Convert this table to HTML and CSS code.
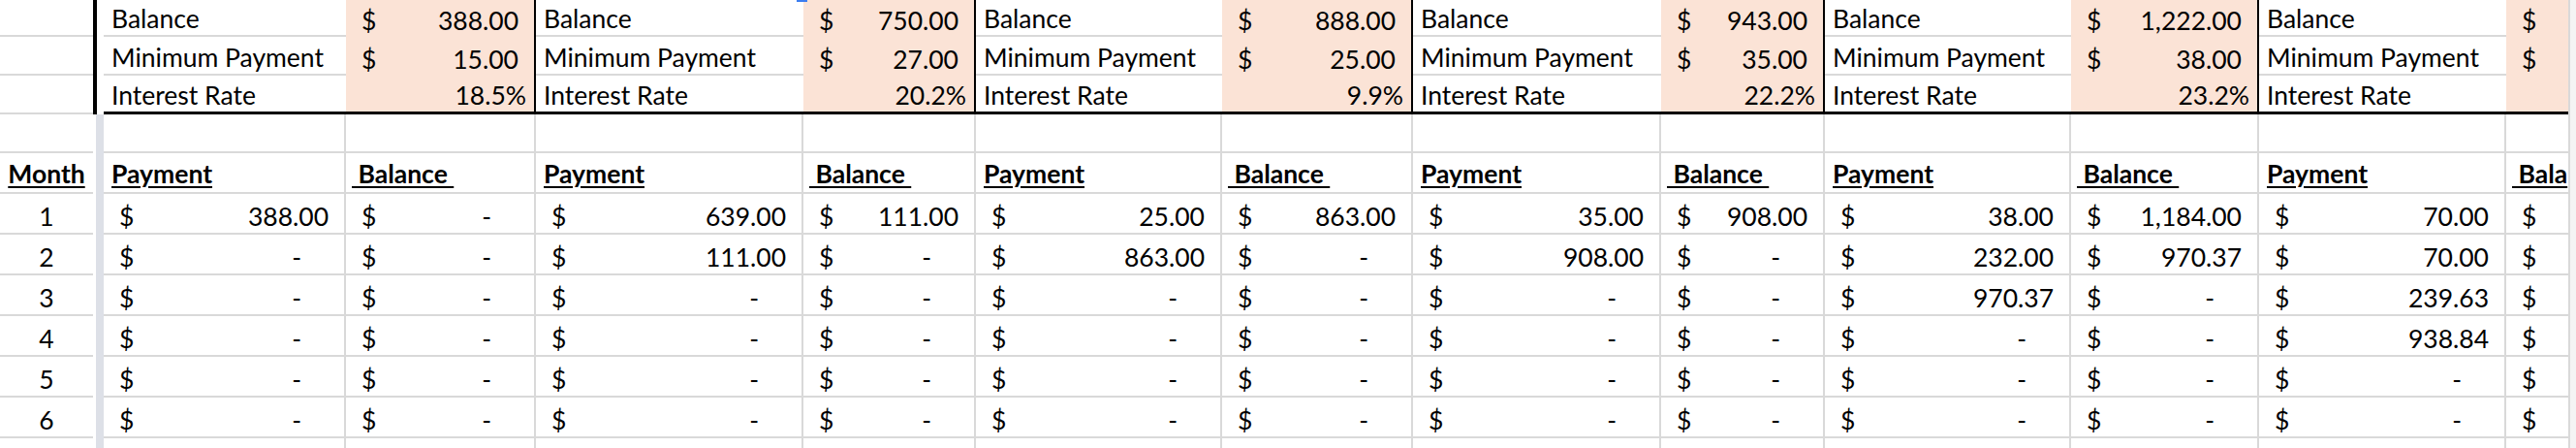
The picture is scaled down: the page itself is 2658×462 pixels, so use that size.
FILE: index.html
```html
<!DOCTYPE html>
<html lang="en">
<head>
<meta charset="utf-8">
<title>Debt payoff sheet</title>
<link rel="stylesheet" href="styles.css">
</head>
<body>
<div class="window">
  <div class="sheet">
    <div class="row r1">
      <div class="c a"></div><div class="c st"></div>
      <div class="c lb">Balance</div><div class="c pk bk m"><span>$</span><span>388.00</span></div>
      <div class="c lb">Balance</div><div class="c pk bk m"><span>$</span><span>750.00</span></div>
      <div class="c lb">Balance</div><div class="c pk bk m"><span>$</span><span>888.00</span></div>
      <div class="c lb">Balance</div><div class="c pk bk m"><span>$</span><span>943.00</span></div>
      <div class="c lb">Balance</div><div class="c pk bk m"><span>$</span><span>1,222.00</span></div>
      <div class="c lb">Balance</div><div class="c pk m"><span>$</span></div>
    </div>
    <div class="row r2">
      <div class="c a"></div><div class="c st"></div>
      <div class="c lb">Minimum Payment</div><div class="c pk bk m"><span>$</span><span>15.00</span></div>
      <div class="c lb">Minimum Payment</div><div class="c pk bk m"><span>$</span><span>27.00</span></div>
      <div class="c lb">Minimum Payment</div><div class="c pk bk m"><span>$</span><span>25.00</span></div>
      <div class="c lb">Minimum Payment</div><div class="c pk bk m"><span>$</span><span>35.00</span></div>
      <div class="c lb">Minimum Payment</div><div class="c pk bk m"><span>$</span><span>38.00</span></div>
      <div class="c lb">Minimum Payment</div><div class="c pk m"><span>$</span></div>
    </div>
    <div class="row r3">
      <div class="c a"></div><div class="c st"></div>
      <div class="c lb">Interest Rate</div><div class="c pk bk pct">18.5%</div>
      <div class="c lb">Interest Rate</div><div class="c pk bk pct">20.2%</div>
      <div class="c lb">Interest Rate</div><div class="c pk bk pct">9.9%</div>
      <div class="c lb">Interest Rate</div><div class="c pk bk pct">22.2%</div>
      <div class="c lb">Interest Rate</div><div class="c pk bk pct">23.2%</div>
      <div class="c lb">Interest Rate</div><div class="c pk pct"></div>
    </div>
    <div class="row r4">
      <div class="c a"></div><div class="c s"></div>
      <div class="c g"></div><div class="c g"></div><div class="c g"></div><div class="c g"></div>
      <div class="c g"></div><div class="c g"></div><div class="c g"></div><div class="c g"></div>
      <div class="c g"></div><div class="c g"></div><div class="c g"></div><div class="c gm"></div>
    </div>
    <div class="row rh">
      <div class="c a h"><span class="u">Month</span></div><div class="c s"></div>
      <div class="c g h hp"><span class="u">Payment</span></div><div class="c g h hb"><span class="u"> Balance </span></div>
      <div class="c g h hp"><span class="u">Payment</span></div><div class="c g h hb"><span class="u"> Balance </span></div>
      <div class="c g h hp"><span class="u">Payment</span></div><div class="c g h hb"><span class="u"> Balance </span></div>
      <div class="c g h hp"><span class="u">Payment</span></div><div class="c g h hb"><span class="u"> Balance </span></div>
      <div class="c g h hp"><span class="u">Payment</span></div><div class="c g h hb"><span class="u"> Balance </span></div>
      <div class="c g h hp"><span class="u">Payment</span></div><div class="c gm h hb"><span class="u"> Bala</span></div>
    </div>
    <div class="row rd">
      <div class="c a">1</div><div class="c s"></div>
      <div class="c g m"><span>$</span><span>388.00</span></div>
      <div class="c g m"><span>$</span><span class="z">-</span></div>
      <div class="c g m"><span>$</span><span>639.00</span></div>
      <div class="c g m"><span>$</span><span>111.00</span></div>
      <div class="c g m"><span>$</span><span>25.00</span></div>
      <div class="c g m"><span>$</span><span>863.00</span></div>
      <div class="c g m"><span>$</span><span>35.00</span></div>
      <div class="c g m"><span>$</span><span>908.00</span></div>
      <div class="c g m"><span>$</span><span>38.00</span></div>
      <div class="c g m"><span>$</span><span>1,184.00</span></div>
      <div class="c g m"><span>$</span><span>70.00</span></div>
      <div class="c gm m"><span>$</span></div>
    </div>
    <div class="row rd">
      <div class="c a">2</div><div class="c s"></div>
      <div class="c g m"><span>$</span><span class="z">-</span></div>
      <div class="c g m"><span>$</span><span class="z">-</span></div>
      <div class="c g m"><span>$</span><span>111.00</span></div>
      <div class="c g m"><span>$</span><span class="z">-</span></div>
      <div class="c g m"><span>$</span><span>863.00</span></div>
      <div class="c g m"><span>$</span><span class="z">-</span></div>
      <div class="c g m"><span>$</span><span>908.00</span></div>
      <div class="c g m"><span>$</span><span class="z">-</span></div>
      <div class="c g m"><span>$</span><span>232.00</span></div>
      <div class="c g m"><span>$</span><span>970.37</span></div>
      <div class="c g m"><span>$</span><span>70.00</span></div>
      <div class="c gm m"><span>$</span></div>
    </div>
    <div class="row rd">
      <div class="c a">3</div><div class="c s"></div>
      <div class="c g m"><span>$</span><span class="z">-</span></div>
      <div class="c g m"><span>$</span><span class="z">-</span></div>
      <div class="c g m"><span>$</span><span class="z">-</span></div>
      <div class="c g m"><span>$</span><span class="z">-</span></div>
      <div class="c g m"><span>$</span><span class="z">-</span></div>
      <div class="c g m"><span>$</span><span class="z">-</span></div>
      <div class="c g m"><span>$</span><span class="z">-</span></div>
      <div class="c g m"><span>$</span><span class="z">-</span></div>
      <div class="c g m"><span>$</span><span>970.37</span></div>
      <div class="c g m"><span>$</span><span class="z">-</span></div>
      <div class="c g m"><span>$</span><span>239.63</span></div>
      <div class="c gm m"><span>$</span></div>
    </div>
    <div class="row rd">
      <div class="c a">4</div><div class="c s"></div>
      <div class="c g m"><span>$</span><span class="z">-</span></div>
      <div class="c g m"><span>$</span><span class="z">-</span></div>
      <div class="c g m"><span>$</span><span class="z">-</span></div>
      <div class="c g m"><span>$</span><span class="z">-</span></div>
      <div class="c g m"><span>$</span><span class="z">-</span></div>
      <div class="c g m"><span>$</span><span class="z">-</span></div>
      <div class="c g m"><span>$</span><span class="z">-</span></div>
      <div class="c g m"><span>$</span><span class="z">-</span></div>
      <div class="c g m"><span>$</span><span class="z">-</span></div>
      <div class="c g m"><span>$</span><span class="z">-</span></div>
      <div class="c g m"><span>$</span><span>938.84</span></div>
      <div class="c gm m"><span>$</span></div>
    </div>
    <div class="row rd">
      <div class="c a">5</div><div class="c s"></div>
      <div class="c g m"><span>$</span><span class="z">-</span></div>
      <div class="c g m"><span>$</span><span class="z">-</span></div>
      <div class="c g m"><span>$</span><span class="z">-</span></div>
      <div class="c g m"><span>$</span><span class="z">-</span></div>
      <div class="c g m"><span>$</span><span class="z">-</span></div>
      <div class="c g m"><span>$</span><span class="z">-</span></div>
      <div class="c g m"><span>$</span><span class="z">-</span></div>
      <div class="c g m"><span>$</span><span class="z">-</span></div>
      <div class="c g m"><span>$</span><span class="z">-</span></div>
      <div class="c g m"><span>$</span><span class="z">-</span></div>
      <div class="c g m"><span>$</span><span class="z">-</span></div>
      <div class="c gm m"><span>$</span></div>
    </div>
    <div class="row rd">
      <div class="c a">6</div><div class="c s"></div>
      <div class="c g m"><span>$</span><span class="z">-</span></div>
      <div class="c g m"><span>$</span><span class="z">-</span></div>
      <div class="c g m"><span>$</span><span class="z">-</span></div>
      <div class="c g m"><span>$</span><span class="z">-</span></div>
      <div class="c g m"><span>$</span><span class="z">-</span></div>
      <div class="c g m"><span>$</span><span class="z">-</span></div>
      <div class="c g m"><span>$</span><span class="z">-</span></div>
      <div class="c g m"><span>$</span><span class="z">-</span></div>
      <div class="c g m"><span>$</span><span class="z">-</span></div>
      <div class="c g m"><span>$</span><span class="z">-</span></div>
      <div class="c g m"><span>$</span><span class="z">-</span></div>
      <div class="c gm m"><span>$</span></div>
    </div>
    <div class="row rd">
      <div class="c a"></div><div class="c s"></div>
      <div class="c g"></div><div class="c g"></div><div class="c g"></div><div class="c g"></div>
      <div class="c g"></div><div class="c g"></div><div class="c g"></div><div class="c g"></div>
      <div class="c g"></div><div class="c g"></div><div class="c g"></div><div class="c gm"></div>
    </div>
  </div>
  <div class="edge"></div>
  <div class="handle"></div>
</div>
</body>
</html>
```

FILE: styles.css
```css
html, body {
  margin: 0;
  padding: 0;
  background: #ffffff;
}

body {
  width: 2658px;
  height: 462px;
  overflow: hidden;
  font-family: "Lato", "Liberation Sans", sans-serif;
  font-size: 26.5px;
  color: #000000;
}

.window {
  position: relative;
  display: flex;
  height: 462px;
  overflow: hidden;
}

.sheet {
  width: 2650px;
  flex: none;
}

.row {
  display: grid;
  grid-template-columns: 96px 11px 250px 196px 276px 178px 254px 197px 256px 169px 254px 194px 255px 64px;
}

.r1 { height: 38px; }
.r2 { height: 40px; }
.r3 { height: 40px; }
.r4 { height: 40px; }
.rh { height: 42px; }
.rd { height: 42px; }

.c {
  box-sizing: border-box;
  display: flex;
  align-items: flex-end;
  line-height: 30px;
  padding-bottom: 2px;
  white-space: pre;
  overflow: hidden;
  border-bottom: 2px solid #d9d9d9;
}

.a {
  justify-content: center;
}

.st {
  border-bottom: none;
  border-left: 4px solid #000000;
  background: #ffffff;
}

.s {
  border-bottom: none;
  border-left: 3px solid #ffffff;
  background: #dde0e7;
}

.lb {
  padding-left: 8px;
}

.pk {
  background: #fbe3d6;
  border-bottom: none;
}

.bk {
  border-right: 2px solid #000000;
}

.r3 .lb,
.r3 .pk {
  border-bottom: 3px solid #000000;
}

.m {
  justify-content: space-between;
  padding-left: 16px;
  padding-right: 16px;
}

.pct {
  justify-content: flex-end;
  padding-right: 8px;
}

.z {
  margin-right: 28px;
}

.g {
  border-right: 2px solid #d9d9d9;
}

.h {
  font-weight: 700;
  padding-bottom: 4px;
}

.hp {
  padding-left: 8px;
}

.hb {
  padding-left: 6px;
}

.u {
  text-decoration: underline;
  text-decoration-thickness: 2px;
  text-underline-offset: 3px;
}

.edge {
  flex: none;
  box-sizing: border-box;
  width: 8px;
  height: 462px;
  border-left: 2px solid #d9d9d9;
  background: #f4f4f4;
}

.handle {
  position: absolute;
  left: 822px;
  top: 0;
  width: 11px;
  height: 2px;
  background: #3d7ef0;
}
```
